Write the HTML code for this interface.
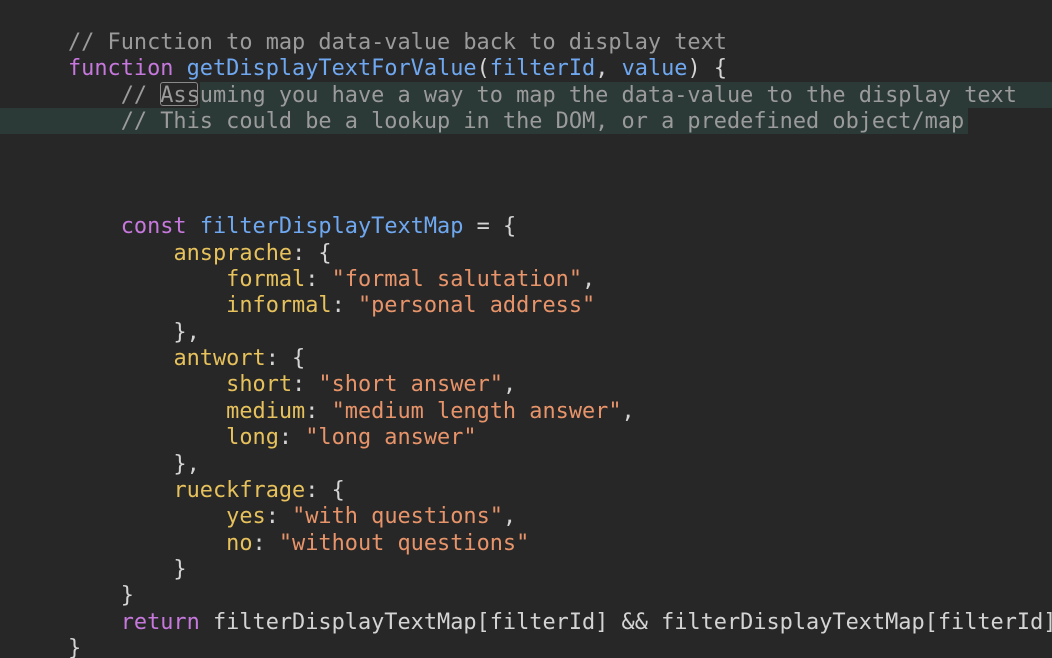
<!DOCTYPE html>
<html><head><style>
html,body{margin:0;padding:0;background:#272727;width:1052px;height:658px;overflow:hidden}
.code{position:absolute;left:68px;top:30px;width:984px;height:628px;overflow:hidden;font-family:"DejaVu Sans Mono","Liberation Mono",monospace;font-size:21.9px;line-height:26.35px;white-space:pre;color:#d4d4d4}
.c{color:#9b9b9b}.k{color:#c678dd}.f{color:#6fa8f0}.p{color:#e6c15c}.s{color:#e8946a}
.hl1{position:absolute;left:200px;top:82px;width:852px;height:26px;background:#2b3937}
.hl2{position:absolute;left:0;top:108px;width:968px;height:26px;background:#2b3937}
.box{position:absolute;left:160px;top:82px;width:38px;height:24px;border:1.5px solid #8a8a8a;border-radius:3px;box-sizing:border-box}
</style></head><body>
<div class="hl1"></div><div class="hl2"></div><div class="box"></div>
<div class="code"><span class="c">// Function to map data-value back to display text</span>
<span class="k">function</span> <span class="f">getDisplayTextForValue</span>(<span class="f">filterId</span>, <span class="f">value</span>) {
    <span class="c">// Assuming you have a way to map the data-value to the display text</span>
    <span class="c">// This could be a lookup in the DOM, or a predefined object/map</span>



    <span class="k">const</span> <span class="f">filterDisplayTextMap</span> = {
        <span class="p">ansprache</span>: {
            <span class="p">formal</span>: <span class="s">"formal salutation"</span>,
            <span class="p">informal</span>: <span class="s">"personal address"</span>
        },
        <span class="p">antwort</span>: {
            <span class="p">short</span>: <span class="s">"short answer"</span>,
            <span class="p">medium</span>: <span class="s">"medium length answer"</span>,
            <span class="p">long</span>: <span class="s">"long answer"</span>
        },
        <span class="p">rueckfrage</span>: {
            <span class="p">yes</span>: <span class="s">"with questions"</span>,
            <span class="p">no</span>: <span class="s">"without questions"</span>
        }
    }
    <span class="k">return</span> filterDisplayTextMap[filterId] &amp;&amp; filterDisplayTextMap[filterId][value];
}</div>
</body></html>
